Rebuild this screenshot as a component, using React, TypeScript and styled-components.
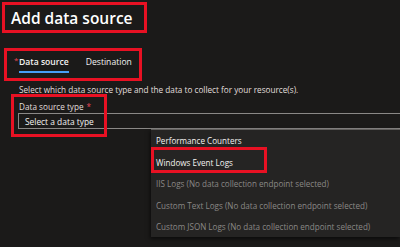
import styled, { createGlobalStyle } from 'styled-components';

const GlobalStyle = createGlobalStyle`
  body {
    margin: 0;
    background: #1b1a19;
    font-family: "Open Sans", "Noto Sans", sans-serif;
    color: #f3f2f1;
  }
`;

const Page = styled.div`
  width: 400px;
  height: 247px;
  overflow: hidden;
  display: flex;
  flex-direction: column;
  align-items: flex-start;
  background: #1b1a19;
`;

const TitleBox = styled.div`
  box-sizing: border-box;
  margin: 2px 0 0 2px;
  width: 145px;
  height: 31px;
  border: 3px solid #e81123;
  padding-left: 6px;
  display: flex;
  align-items: center;
`;

const Title = styled.h1`
  margin: 0;
  font-size: 15.5px;
  font-weight: 600;
  color: #ffffff;
  white-space: nowrap;
`;

const Tabs = styled.div`
  box-sizing: border-box;
  margin: 15px 0 0 4px;
  width: 138px;
  height: 33px;
  border: 3px solid #e81123;
  padding: 5px 0 0 7px;
  display: flex;
  align-items: flex-start;
  gap: 17px;
`;

const Tab = styled.div`
  display: flex;
  align-items: flex-start;
`;

const Star = styled.span`
  color: #e74856;
  font-size: 8px;
  line-height: 8px;
  width: 5px;
`;

const TabLabel = styled.span<{ $active?: boolean }>`
  font-size: 8.6px;
  line-height: 13px;
  font-weight: ${(p) => (p.$active ? 600 : 400)};
  color: #f3f2f1;
  padding-bottom: 2px;
  border-bottom: 2px solid ${(p) => (p.$active ? '#479ef5' : 'transparent')};
  white-space: nowrap;
`;

const Description = styled.p`
  margin: 2px 0 0 19px;
  font-size: 8.2px;
  line-height: 13px;
  color: #e1dfdd;
  white-space: nowrap;
`;

const Field = styled.div`
  position: relative;
  align-self: stretch;
  margin-top: 4px;
  padding-left: 18px;
`;

const Label = styled.label`
  display: block;
  padding-left: 1px;
  font-size: 8.2px;
  line-height: 13px;
  color: #e1dfdd;
  white-space: nowrap;
  span {
    color: #e74856;
    margin-left: 3px;
  }
`;

const Select = styled.div`
  box-sizing: border-box;
  height: 16px;
  border: 1px solid #8a8886;
  border-right: none;
  padding-left: 6px;
  display: flex;
  align-items: center;
  font-size: 8.4px;
  color: #f3f2f1;
  white-space: nowrap;
`;

const Callout = styled.div<{ $w: number; $h: number; $top: number; $left: number }>`
  position: absolute;
  top: ${(p) => p.$top}px;
  left: ${(p) => p.$left}px;
  width: ${(p) => p.$w}px;
  height: ${(p) => p.$h}px;
  box-sizing: border-box;
  border: 3px solid #e81123;
  pointer-events: none;
`;

const Menu = styled.ul`
  position: absolute;
  top: 29px;
  left: 151px;
  right: 0;
  height: 107px;
  margin: 0;
  padding: 0;
  list-style: none;
  background: #252423;
  border-top: 1px solid #605e5c;
  box-shadow: -1px 2px 4px rgba(0, 0, 0, 0.6);
`;

const Item = styled.li<{ $disabled?: boolean }>`
  position: relative;
  height: 21.5px;
  padding-left: 5px;
  display: flex;
  align-items: center;
  font-size: 8.1px;
  color: ${(p) => (p.$disabled ? '#8a8886' : '#f3f2f1')};
  white-space: nowrap;
`;

const items = [
  { label: 'Performance Counters' },
  { label: 'Windows Event Logs', marked: true },
  { label: 'IIS Logs (No data collection endpoint selected)', disabled: true },
  { label: 'Custom Text Logs (No data collection endpoint selected)', disabled: true },
  { label: 'Custom JSON Logs (No data collection endpoint selected)', disabled: true },
];

export default function App() {
  return (
    <>
      <GlobalStyle />
      <Page>
        <TitleBox>
          <Title>Add data source</Title>
        </TitleBox>
        <Tabs>
          <Tab>
            <Star>*</Star>
            <TabLabel $active>Data source</TabLabel>
          </Tab>
          <Tab>
            <TabLabel>Destination</TabLabel>
          </Tab>
        </Tabs>
        <Description>
          Select which data source type and the data to collect for your resource(s).
        </Description>
        <Field>
          <Label>
            Data source type<span>*</span>
          </Label>
          <Select>Select a data type</Select>
          <Callout $top={-6} $left={11} $w={96} $h={43} />
          <Menu>
            {items.map((it) => (
              <Item key={it.label} $disabled={it.disabled}>
                {it.label}
                {it.marked && <Callout $top={-5} $left={0} $w={116} $h={26} />}
              </Item>
            ))}
          </Menu>
        </Field>
      </Page>
    </>
  );
}
